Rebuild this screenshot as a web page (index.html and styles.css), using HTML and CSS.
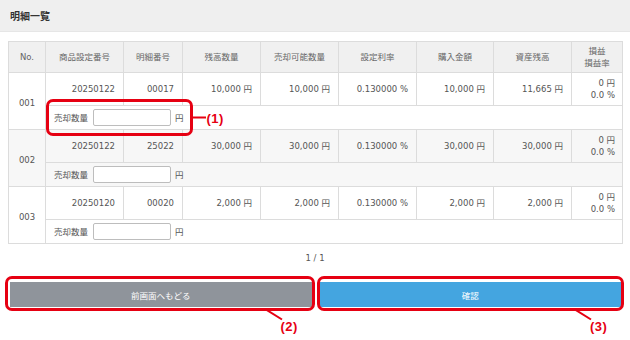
FILE: index.html
```html
<!DOCTYPE html>
<html lang="ja">
<head>
<meta charset="utf-8">
<title>明細一覧</title>
<link rel="stylesheet" href="styles.css">
</head>
<body>
<div class="page">
  <div class="section-head"><h2 class="section-title">明細一覧</h2></div>
  <div class="section-body">
    <table class="detail-table">
      <colgroup>
        <col class="w-no"><col class="w-78"><col class="w-59"><col class="w-78"><col class="w-78"><col class="w-78"><col class="w-77"><col class="w-78"><col class="w-51">
      </colgroup>
      <thead>
        <tr>
          <th>No.</th><th>商品設定番号</th><th>明細番号</th><th>残高数量</th><th>売却可能数量</th><th>設定利率</th><th>購入金額</th><th>資産残高</th><th class="two">損益<br>損益率</th>
        </tr>
      </thead>
      <tbody class="item">
        <tr class="data-row">
          <td class="no" rowspan="2">001</td>
          <td class="num">20250122</td><td class="num">00017</td><td class="num">10,000 円</td><td class="num">10,000 円</td><td class="num">0.130000 %</td><td class="num">10,000 円</td><td class="num">11,665 円</td><td class="num two">0 円<br>0.0 %</td>
        </tr>
        <tr class="sell-row">
          <td colspan="8">
            <div class="sell">
              <span class="sell-label">売却数量</span><input class="sell-input" type="text"><span class="sell-unit">円</span>
              <span class="frame frame-1"></span>
              <span class="callout-1"><span class="leader-h"></span><span class="callout-text">(1)</span></span>
            </div>
          </td>
        </tr>
      </tbody>
      <tbody class="item">
        <tr class="data-row">
          <td class="no" rowspan="2">002</td>
          <td class="num">20250122</td><td class="num">25022</td><td class="num">30,000 円</td><td class="num">30,000 円</td><td class="num">0.130000 %</td><td class="num">30,000 円</td><td class="num">30,000 円</td><td class="num two">0 円<br>0.0 %</td>
        </tr>
        <tr class="sell-row">
          <td colspan="8">
            <div class="sell">
              <span class="sell-label">売却数量</span><input class="sell-input" type="text"><span class="sell-unit">円</span>
            </div>
          </td>
        </tr>
      </tbody>
      <tbody class="item">
        <tr class="data-row">
          <td class="no" rowspan="2">003</td>
          <td class="num">20250120</td><td class="num">00020</td><td class="num">2,000 円</td><td class="num">2,000 円</td><td class="num">0.130000 %</td><td class="num">2,000 円</td><td class="num">2,000 円</td><td class="num two">0 円<br>0.0 %</td>
        </tr>
        <tr class="sell-row">
          <td colspan="8">
            <div class="sell">
              <span class="sell-label">売却数量</span><input class="sell-input" type="text"><span class="sell-unit">円</span>
            </div>
          </td>
        </tr>
      </tbody>
    </table>

    <div class="pager">1 / 1</div>

    <div class="actions">
      <div class="action action-back">
        <button class="btn btn-back" type="button">前画面へもどる</button>
        <span class="frame frame-btn"></span>
        <span class="callout-btn">
          <svg class="leader" width="18" height="12" viewBox="0 0 18 12"><line x1="0" y1="0.5" x2="16" y2="10.5" stroke="#e60012" stroke-width="2"/></svg>
          <span class="callout-text">(2)</span>
        </span>
      </div>
      <div class="action action-ok">
        <button class="btn btn-ok" type="button">確認</button>
        <span class="frame frame-btn"></span>
        <span class="callout-btn">
          <svg class="leader" width="18" height="12" viewBox="0 0 18 12"><line x1="0" y1="0.5" x2="16" y2="10.5" stroke="#e60012" stroke-width="2"/></svg>
          <span class="callout-text">(3)</span>
        </span>
      </div>
    </div>
  </div>
</div>
</body>
</html>
```

FILE: styles.css
```css
* { box-sizing: border-box; }

html, body {
  margin: 0;
  padding: 0;
  background: #ffffff;
}

body {
  font-family: "DejaVu Sans", "Noto Sans CJK JP", sans-serif;
  font-size: 8.5px;
  color: #555555;
  width: 630px;
  height: 340px;
  overflow: hidden;
}

.section-head {
  height: 32px;
  background: #efefef;
  border-bottom: 1px solid #e6e6e6;
  display: flex;
  align-items: center;
  padding-left: 10px;
}

.section-title {
  margin: 0;
  font-family: "Noto Sans CJK JP", sans-serif;
  font-size: 10px;
  font-weight: bold;
  color: #333333;
}

.section-body {
  padding: 9px 0 0 0;
}

.detail-table {
  margin-left: 8px;
  width: 614px;
  table-layout: fixed;
  border-collapse: collapse;
  border: 1px solid #dcdcdc;
}

.w-no { width: 37px; }
.w-78 { width: 78px; }
.w-77 { width: 77px; }
.w-59 { width: 59px; }
.w-51 { width: 51px; }

.detail-table th {
  height: 31px;
  background: #f0f0f0;
  border: 1px solid #dcdcdc;
  font-weight: normal;
  color: #666666;
  text-align: center;
  padding: 0;
  line-height: 12px;
}

.detail-table td {
  border: 1px solid #dcdcdc;
  padding: 0;
  line-height: 12px;
}

.detail-table .data-row td {
  height: 33px;
}

.detail-table .sell-row td {
  height: 24px;
  padding-left: 8px;
}

.detail-table td.num {
  text-align: right;
  padding-right: 8px;
}

.detail-table td.no {
  text-align: center;
  padding-top: 4px;
}

.detail-table td.num.two {
  padding-right: 7px;
}

.item:nth-of-type(even) td {
  background: #f7f7f7;
}

.sell {
  position: relative;
  display: inline-flex;
  align-items: center;
  height: 17px;
}

.sell-label {
  margin-right: 5px;
}

.sell-input {
  width: 78px;
  height: 17px;
  margin: 0;
  padding: 0 3px;
  border: 1px solid #bdbdbd;
  border-radius: 2px;
  background: #ffffff;
  font: inherit;
}

.sell-unit {
  margin-left: 4px;
}

.frame {
  position: absolute;
  border: 3px solid #e60012;
  border-radius: 7px;
  pointer-events: none;
}

.frame-1 {
  left: -8px;
  right: -9px;
  top: -10px;
  bottom: -10px;
}

.callout-1 {
  position: absolute;
  left: calc(100% + 9px);
  top: 50%;
  transform: translateY(-50%);
  display: flex;
  align-items: center;
}

.leader-h {
  display: block;
  width: 13px;
  height: 2px;
  background: #e60012;
  margin-right: 1px;
}

.callout-text {
  font-family: "Liberation Sans", Arial, sans-serif;
  font-size: 13px;
  font-weight: bold;
  color: #e60012;
  letter-spacing: 0.5px;
  line-height: 13px;
  white-space: nowrap;
}

.pager {
  margin-top: 8px;
  height: 12px;
  line-height: 12px;
  text-align: center;
  color: #555555;
}

.actions {
  margin-top: 18px;
  display: flex;
  gap: 8px;
  padding: 0 9px 0 10px;
}

.action {
  position: relative;
  flex: 1 1 0;
}

.btn {
  display: block;
  width: 100%;
  height: 25px;
  border: none;
  margin: 0;
  padding: 0;
  font-family: "DejaVu Sans", "Noto Sans CJK JP", sans-serif;
  font-size: 8.5px;
  color: #ffffff;
  cursor: pointer;
}

.btn-back { background: #8f949b; }
.btn-ok { background: #44a5e0; }

.frame-btn {
  top: -6px;
  bottom: -4px;
  left: -3px;
  right: -3px;
}

.action-back .frame-btn { left: -5px; }

.callout-btn {
  position: absolute;
  top: 27px;
  right: 10px;
  width: 36px;
  height: 26px;
}

.leader {
  position: absolute;
  left: 0;
  top: 0;
}

.callout-btn .callout-text {
  position: absolute;
  left: 15px;
  top: 11px;
}
```
